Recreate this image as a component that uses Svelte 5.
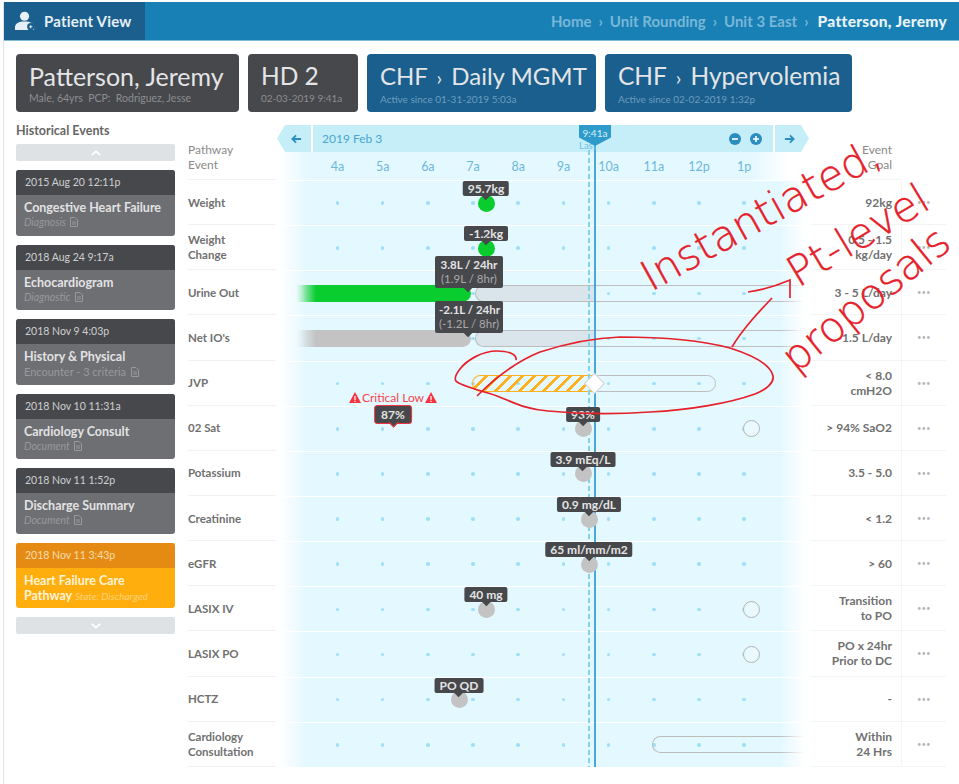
<script>
  const history = [
    { date: '2015 Aug 20 12:11p', title: 'Congestive Heart Failure', sub: 'Diagnosis', italic: true },
    { date: '2018 Aug 24 9:17a', title: 'Echocardiogram', sub: 'Diagnostic', italic: true },
    { date: '2018 Nov 9 4:03p', title: 'History & Physical', sub: 'Encounter - 3 criteria', italic: false },
    { date: '2018 Nov 10 11:31a', title: 'Cardiology Consult', sub: 'Document', italic: true },
    { date: '2018 Nov 11 1:52p', title: 'Discharge Summary', sub: 'Document', italic: true }
  ];

  const hours = ['4a', '5a', '6a', '7a', '8a', '9a', '10a', '11a', '12p', '1p'];

  // x values are page pixels, the track column starts at 276
  const rows = [
    { name: ['Weight'], goal: ['92kg'], marks: [{ x: 486, kind: 'green', tag: '95.7kg' }] },
    { name: ['Weight', 'Change'], goal: ['0.5 - 1.5', 'kg/day'], marks: [{ x: 486, kind: 'green', tag: '-1.2kg' }] },
    {
      name: ['Urine Out'], goal: ['3 - 5 L/day'],
      bars: [{ from: 296, to: 471, kind: 'solid-green' }, { from: 475, to: 811, kind: 'ghost open filled' }],
      marks: [{ x: 468, tagOnly: true, tag: '3.8L / 24hr', sub: '(1.9L / 8hr)' }]
    },
    {
      name: ["Net IO's"], goal: ['-1.5 L/day'],
      bars: [{ from: 296, to: 471, kind: 'solid-grey' }, { from: 475, to: 811, kind: 'ghost open filled' }],
      marks: [{ x: 468, tagOnly: true, tag: '-2.1L / 24hr', sub: '(-1.2L / 8hr)' }]
    },
    {
      name: ['JVP'], goal: ['< 8.0', 'cmH2O'],
      bars: [{ from: 590, to: 716, kind: 'ghost' }, { from: 472, to: 594, kind: 'hatched' }],
      diamond: 595
    },
    {
      name: ['02 Sat'], goal: ['> 94% SaO2'],
      critical: { x: 393, tag: '87%' },
      marks: [{ x: 583, kind: 'grey', tag: '93%' }, { x: 751, kind: 'open' }]
    },
    { name: ['Potassium'], goal: ['3.5 - 5.0'], marks: [{ x: 583, kind: 'grey', tag: '3.9 mEq/L' }] },
    { name: ['Creatinine'], goal: ['< 1.2'], marks: [{ x: 589, kind: 'grey', tag: '0.9 mg/dL' }] },
    { name: ['eGFR'], goal: ['> 60'], marks: [{ x: 589, kind: 'grey', tag: '65 ml/mm/m2' }] },
    { name: ['LASIX IV'], goal: ['Transition', 'to PO'], marks: [{ x: 486, kind: 'grey', tag: '40 mg' }, { x: 751, kind: 'open' }] },
    { name: ['LASIX PO'], goal: ['PO x 24hr', 'Prior to DC'], marks: [{ x: 751, kind: 'open' }] },
    { name: ['HCTZ'], goal: ['-'], marks: [{ x: 459, kind: 'grey', tag: 'PO QD' }] },
    { name: ['Cardiology', 'Consultation'], goal: ['Within', '24 Hrs'], bars: [{ from: 652, to: 811, kind: 'ghost open' }] }
  ];

  const px = (x) => x - 276;
</script>

{#snippet docIcon()}
  <svg class="doc" viewBox="0 0 8 10" width="8" height="10">
    <path d="M.5.5h4.5l2.500 2.500v6.500h-7z" fill="none" stroke="currentColor" />
    <path d="M2 5h4M2 7h4" stroke="currentColor" />
  </svg>
{/snippet}

{#snippet warnIcon()}
  <svg viewBox="0 0 12 11" width="12" height="11">
    <path d="M6 0l6 11H0z" fill="#f5333f" />
    <path d="M5.400 4h1.200v4h-1.200zM5.400 8.800h1.200v1.200h-1.200z" fill="#fff" />
  </svg>
{/snippet}

<div class="page">
  <header class="topbar">
    <div class="tab">
      <svg viewBox="0 0 22 22" width="21" height="21">
        <circle cx="10" cy="5.500" r="4.800" fill="#e6f0f6" />
        <path d="M0 20v-3c0-4 4-6 10-6s10 2 10 6v3z" fill="#e6f0f6" />
        <circle cx="16.500" cy="16.500" r="3.800" fill="#1a5f8e" />
        <path d="M14.800 16.500h3.400M16.500 14.800v3.400" stroke="#e6f0f6" />
      </svg>
      <span>Patient View</span>
    </div>
    <nav class="crumbs">
      <span>Home</span><i>›</i><span>Unit Rounding</span><i>›</i><span>Unit 3 East</span><i>›</i>
      <b>Patterson, Jeremy</b>
    </nav>
  </header>

  <section class="summary">
    <div class="card patient">
      <h1>Patterson, Jeremy</h1>
      <p>Male, 64yrs &nbsp;PCP: &nbsp;Rodriguez, Jesse</p>
    </div>
    <div class="card day">
      <h1>HD 2</h1>
      <p>02-03-2019 9:41a</p>
    </div>
    <div class="card blue daily">
      <h1>CHF <i>›</i> Daily MGMT</h1>
      <p>Active since 01-31-2019 5:03a</p>
    </div>
    <div class="card blue hyper">
      <h1>CHF <i>›</i> Hypervolemia</h1>
      <p>Active since 02-02-2019 1:32p</p>
    </div>
  </section>

  <main class="content">
    <aside class="sidebar">
      <h2>Historical Events</h2>
      <button class="pager" aria-label="Earlier">
        <svg viewBox="0 0 12 7" width="10" height="6"><path d="M1 6l5-4.500L11 6" fill="none" stroke="#fff" stroke-width="2" /></svg>
      </button>
      {#each history as item}
        <article class="event">
          <div class="when">{item.date}</div>
          <div class="what">
            <strong>{item.title}</strong>
            <em class:plain={!item.italic}>{item.sub} {@render docIcon()}</em>
          </div>
        </article>
      {/each}
      <article class="event active">
        <div class="when">2018 Nov 11 3:43p</div>
        <div class="what">
          <strong>Heart Failure Care<br />Pathway <em>State: Discharged</em></strong>
        </div>
      </article>
      <button class="pager" aria-label="Later">
        <svg viewBox="0 0 12 7" width="10" height="6"><path d="M1 1l5 4.500L11 1" fill="none" stroke="#fff" stroke-width="2" /></svg>
      </button>
    </aside>

    <div class="board">
      <div class="row head">
        <div class="name">Pathway<br />Event</div>
        <div class="timehead">
          <div class="navbar">
            <button class="step back" aria-label="Previous">
              <svg viewBox="0 0 12 10" width="11" height="10"><path d="M11 5H2M5.500 1L1.500 5l4 4" fill="none" stroke="#2a8fc0" stroke-width="2" /></svg>
            </button>
            <div class="range">
              <span>2019 Feb 3</span>
              <div class="zoomers">
                <svg viewBox="0 0 12 12" width="12" height="12"><circle cx="6" cy="6" r="6" fill="#2a8fc0" /><path d="M3 6h6" stroke="#fff" stroke-width="1.600" /></svg>
                <svg viewBox="0 0 12 12" width="12" height="12"><circle cx="6" cy="6" r="6" fill="#2a8fc0" /><path d="M3 6h6M6 3v6" stroke="#fff" stroke-width="1.600" /></svg>
              </div>
            </div>
            <button class="step next" aria-label="Next">
              <svg viewBox="0 0 12 10" width="11" height="10"><path d="M1 5h9M6.500 1l4 4-4 4" fill="none" stroke="#2a8fc0" stroke-width="2" /></svg>
            </button>
          </div>
          <div class="hours">
            {#each hours as h}<span>{h}</span>{/each}
          </div>
        </div>
        <div class="goal">Event<br />Goal</div>
        <div class="more blank"></div>
      </div>

      {#each rows as row}
        <div class="row">
          <div class="name"><span>{#each row.name as line, i}{#if i}<br />{/if}{line}{/each}</span></div>
          <div class="track">
            <div class="dots">{#each hours as h}<span><i></i></span>{/each}</div>
            {#each row.bars ?? [] as bar}
              <div class="bar {bar.kind}" style="left:{px(bar.from)}px;width:{bar.to - bar.from}px"></div>
            {/each}
            {#if row.diamond}
              <div class="diamond" style="left:{px(row.diamond)}px"></div>
            {/if}
            {#if row.critical}
              <div class="critical" style="left:{px(row.critical.x)}px">
                <div class="warn">{@render warnIcon()}Critical Low{@render warnIcon()}</div>
                <div class="tag alert">{row.critical.tag}</div>
              </div>
            {/if}
            {#each row.marks ?? [] as mark}
              <div class="mark" style="left:{px(mark.x)}px">
                {#if mark.kind}<span class="circle {mark.kind}"></span>{/if}
                {#if mark.tag}
                  <div class="tag" class:high={mark.tagOnly}>
                    {mark.tag}{#if mark.sub}<small>{mark.sub}</small>{/if}
                  </div>
                {/if}
              </div>
            {/each}
          </div>
          <div class="goal"><span>{#each row.goal as line, i}{#if i}<br />{/if}{line}{/each}</span></div>
          <div class="more">•••</div>
        </div>
      {/each}

      <div class="lastline"></div>
      <div class="nowline"></div>
      <div class="lastlabel">Last</div>
      <div class="nowflag">9:41a</div>
    </div>
  </main>

  <svg class="ink" viewBox="0 0 959 784" width="959" height="784">
    <path d="M516 360C517 354 508 351 497 351C482 351 467 360 460 369C456 374 454 378 456 381C460 386 480 390 497 396C515 403 525 409 548 411C580 414 620 414 650 412C690 410 730 403 755 394C768 389 774 382 773 376C771 366 755 356 730 348C700 340 660 337 620 337C590 338 565 344 540 352C515 362 495 378 477 396" />
    <path d="M748 292c15-2 28-6 42-12l0 18M772 298c-16 17-30 32-40 49" />
    <text transform="translate(651 292) rotate(-29)">Instantiated,</text>
    <text transform="translate(798 288) rotate(-31)">Pt-level</text>
    <text transform="translate(796 374) rotate(-39)">proposals</text>
  </svg>
</div>

<style>
  :global(body) {
    background: #fff;
    font-family: 'Lato', 'Open Sans', sans-serif;
    color: #6a6a6a;
  }

  .page {
    position: relative;
    width: 956px;
    height: 782px;
    margin: 2px 0 0 3px;
    border-left: 1px solid #e3e3e3;
    box-sizing: border-box;
    overflow: hidden;
  }

  .topbar {
    display: flex;
    align-items: center;
    justify-content: space-between;
    height: 39px;
    background: #1880b5;
    border-bottom: 1px solid #7fbcdc;
    box-sizing: border-box;
    padding-right: 12px;
  }

  .tab {
    display: flex;
    align-items: center;
    gap: 8px;
    height: 100%;
    width: 141px;
    padding-left: 11px;
    box-sizing: border-box;
    background: #1a5f8e;
    color: #e6f0f6;
    font-size: 15px;
    letter-spacing: 0.2px;
    font-weight: 700;
  }

  .crumbs {
    display: flex;
    align-items: center;
    font-size: 15px;
    font-weight: 700;
    color: #79b7d8;
  }

  .crumbs i {
    font-style: normal;
    margin: 0 7px;
  }

  .crumbs b {
    margin-left: 2px;
    font-size: 15.500px;
    letter-spacing: 0.3px;
    color: #e9f3f8;
  }

  .summary {
    display: flex;
    gap: 9px;
    padding: 13px 0 0 12px;
  }

  .card {
    height: 58px;
    box-sizing: border-box;
    padding: 8px 13px 0;
    background: #47484c;
    border-radius: 4px;
    color: #e3e5e6;
  }

  .card.blue {
    background: #1a5f8e;
  }

  .patient { width: 223px; }
  .day { width: 110px; }
  .daily { width: 229px; }
  .hyper { width: 247px; }

  .card h1 {
    margin: 0;
    font-size: 24.500px;
    font-weight: 400;
    line-height: 28px;
    white-space: nowrap;
  }

  .patient h1 {
    font-size: 25px;
  }

  .daily h1 {
    font-size: 24px;
  }

  .card h1 i {
    font-style: normal;
    font-size: 20px;
    margin: 0 3px;
  }

  .card p {
    margin: 2px 0 0;
    font-size: 10px;
    line-height: 12px;
    color: #8d8e92;
    white-space: nowrap;
  }

  .patient p {
    font-size: 10.500px;
  }

  .card.blue p {
    color: #6d9dbe;
  }

  .content {
    display: flex;
    gap: 13px;
    padding: 13px 0 0 12px;
  }

  .sidebar {
    width: 159px;
    flex: none;
  }

  .sidebar h2 {
    margin: -1px 0 0;
    height: 20px;
    font-size: 12.500px;
    line-height: 13px;
    font-weight: 700;
    color: #666;
  }

  .pager {
    display: flex;
    align-items: center;
    justify-content: center;
    width: 100%;
    height: 17px;
    padding: 0;
    border: 0;
    border-radius: 2px;
    background: #dfe2e5;
  }

  .event {
    margin-top: 9px;
    height: 65.500px;
    border-radius: 3px;
    overflow: hidden;
    background: #6e6f73;
  }

  .event + .pager {
    margin-top: 9px;
  }

  .when {
    height: 25px;
    padding-left: 9px;
    background: #47484c;
    color: #cfcfd1;
    font-size: 10.500px;
    line-height: 25px;
  }

  .what {
    padding: 5px 8px 0;
  }

  .what strong {
    display: block;
    color: #e2e2e3;
    font-size: 12.500px;
    line-height: 15px;
    font-weight: 700;
    white-space: nowrap;
  }

  .what em {
    display: block;
    color: #98999c;
    font-size: 10.500px;
    line-height: 15px;
    white-space: nowrap;
  }

  .what em.plain {
    font-style: normal;
    font-size: 11px;
  }

  .doc {
    margin-left: 2px;
    vertical-align: -1px;
  }

  .event.active {
    background: #ffae0d;
  }

  .active .when {
    background: #e58b14;
    color: #f8dcae;
  }

  .active .what strong {
    color: #fff3d8;
  }

  .active .what strong em {
    display: inline;
    color: #ffd27a;
    font-size: 10px;
    font-weight: 400;
  }

  .board {
    position: relative;
    width: 758px;
  }

  .row {
    display: grid;
    grid-template-columns: 88px 535px 90px 45px;
    height: 45.150px;
    box-sizing: border-box;
  }

  .row.head {
    height: 55px;
  }

  .name {
    display: flex;
    align-items: center;
    font-size: 11.500px;
    line-height: 15px;
    font-weight: 700;
    color: #707070;
    border-bottom: 1px solid #f1f2f3;
    box-sizing: border-box;
  }

  .head .name {
    display: block;
    padding-top: 17px;
    font-size: 12px;
    font-weight: 400;
    color: #8a8a8a;
  }

  .timehead {
    position: relative;
    background: linear-gradient(90deg, #fff 4px, #e4f8ff 32px, #e4f8ff calc(100% - 60px), #fff calc(100% - 22px));
  }

  .navbar {
    display: flex;
    gap: 2px;
    height: 27px;
    padding: 0 2px 0 1px;
    background: #fff;
  }

  .step {
    flex: none;
    width: 34px;
    padding: 0;
    border: 0;
    background: #c5eef9;
    display: flex;
    align-items: center;
    justify-content: center;
  }

  .back {
    clip-path: polygon(8px 0, 100% 0, 100% 100%, 8px 100%, 0 50%);
    padding-left: 4px;
  }

  .next {
    clip-path: polygon(0 0, calc(100% - 8px) 0, 100% 50%, calc(100% - 8px) 100%, 0 100%);
    padding-right: 5px;
  }

  .range {
    flex: 1;
    display: flex;
    align-items: center;
    justify-content: space-between;
    padding: 0 10px 0 9px;
    background: #c5eef9;
    color: #4aa5d0;
    font-size: 12px;
  }

  .zoomers {
    display: flex;
    gap: 9px;
    padding-right: 1px;
  }

  .zoomers svg {
    display: block;
  }

  .hours {
    display: flex;
    height: 28px;
    padding-left: 38.900px;
    align-items: center;
  }

  .hours span {
    width: 45.200px;
    text-align: center;
    color: #6cb8dc;
    font-size: 12.500px;
  }

  .track {
    position: relative;
    background: #e4f8ff;
    border-top: 1px solid #fff;
    box-sizing: border-box;
  }

  .track::after {
    content: '';
    position: absolute;
    inset: 0;
    z-index: 3;
    pointer-events: none;
    background: linear-gradient(90deg, #fff 4px, #fff0 30px, #fff0 calc(100% - 31px), #fff calc(100% - 6px));
  }

  .dots {
    display: flex;
    align-items: center;
    height: 100%;
    padding-left: 38.900px;
  }

  .dots span {
    display: flex;
    justify-content: center;
    width: 45.200px;
  }

  .dots i {
    width: 3.500px;
    height: 3.500px;
    border-radius: 50%;
    background: #9fe0f8;
  }

  .bar {
    position: absolute;
    top: calc(50% - 8.500px);
    height: 17px;
    box-sizing: border-box;
  }

  .solid-green {
    border-radius: 0 9px 9px 0;
    background: linear-gradient(90deg, #09cc2f00, #09cc2f 20px);
  }

  .solid-grey {
    border-radius: 0 9px 9px 0;
    background: linear-gradient(90deg, #c3c3c300, #c3c3c3 20px);
  }

  .ghost {
    border: 1.500px solid #bdbdbd;
    border-radius: 9px;
  }

  .ghost.open {
    border-right: 0;
    border-radius: 9px 0 0 9px;
  }

  .ghost.filled {
    background: linear-gradient(90deg, #d9e5ea 120px, transparent 120px);
  }

  .hatched {
    border: 1.500px solid #ffb020;
    border-right: 0;
    border-radius: 9px 0 0 9px;
    background: repeating-linear-gradient(-45deg, #ffb020 0 3px, transparent 3px 8.500px);
  }

  .diamond {
    position: absolute;
    top: calc(50% - 8px);
    width: 15px;
    height: 15px;
    margin-left: -8px;
    z-index: 2;
    box-sizing: border-box;
    background: #fff;
    border: 1px solid #cfcfcf;
    transform: rotate(45deg);
  }

  .mark,
  .critical {
    position: absolute;
    top: 50%;
    width: 0;
    z-index: 2;
  }

  .circle {
    position: absolute;
    left: -8.500px;
    top: -8.500px;
    width: 17px;
    height: 17px;
    box-sizing: border-box;
    border-radius: 50%;
  }

  .circle.green { background: #09cc2f; }
  .circle.grey { background: #c3c3c3; }
  .circle.open {
    border: 1.500px solid #b3b3b3;
    background: #e9f9ff;
  }

  .tag {
    position: absolute;
    left: 0;
    bottom: 7px;
    transform: translateX(-50%);
    padding: 1px 5px;
    border-radius: 2px;
    background: #47484c;
    color: #e4e4e4;
    font-size: 12px;
    line-height: 13px;
    font-weight: 700;
    text-align: center;
    white-space: nowrap;
  }

  .tag::after {
    content: '';
    position: absolute;
    left: 50%;
    bottom: -3px;
    width: 6px;
    height: 6px;
    margin-left: -3px;
    background: inherit;
    transform: rotate(45deg);
  }

  .tag.high {
    bottom: 5px;
    transform: translateX(-33px);
    width: 60px;
    padding: 2px 4px;
    line-height: 14px;
    font-size: 11.500px;
  }

  .tag.high::after {
    left: 33px;
  }

  .tag small {
    display: block;
    color: #a9a9ab;
    font-size: 11.500px;
    font-weight: 400;
  }

  .warn {
    position: absolute;
    bottom: 25px;
    left: -45px;
    width: 90px;
    display: flex;
    align-items: center;
    justify-content: center;
    gap: 1px;
    color: #f5434e;
    font-size: 12px;
    line-height: 12px;
    white-space: nowrap;
  }

  .tag.alert {
    bottom: 5px;
    padding: 2px 6px;
    border: 1px solid #f0343f;
    border-radius: 3px;
  }

  .tag.alert::after {
    border-right: 1px solid #f0343f;
    border-bottom: 1px solid #f0343f;
  }

  .goal {
    display: flex;
    align-items: center;
    justify-content: flex-end;
    text-align: right;
    padding-right: 9px;
    font-size: 12px;
    line-height: 15px;
    font-weight: 700;
    color: #707070;
    border-bottom: 1px solid #f3f4f5;
    box-sizing: border-box;
  }

  .head .goal {
    align-items: flex-start;
    padding-top: 17px;
    font-weight: 400;
    color: #8a8a8a;
  }

  .more {
    display: flex;
    align-items: center;
    justify-content: center;
    border-left: 1px solid #f3f4f5;
    border-bottom: 1px solid #f3f4f5;
    box-sizing: border-box;
    color: #b5b5b5;
    font-size: 7px;
    letter-spacing: 0.500px;
  }

  .more.blank {
    border: 0;
  }

  /* current time markers run over all the rows */
  .lastline,
  .nowline {
    position: absolute;
    bottom: 0;
    z-index: 1;
    width: 2px;
  }

  .lastline {
    left: 400px;
    top: 25px;
    background: repeating-linear-gradient(#7fd4f0 0 5px, transparent 5px 8px);
  }

  .nowline {
    left: 406px;
    top: 14px;
    background: #4aa8d8;
  }

  .lastlabel {
    position: absolute;
    left: 391px;
    top: 15px;
    z-index: 1;
    font-size: 9.500px;
    line-height: 12px;
    color: #6cc3e6;
  }

  .nowflag {
    position: absolute;
    left: 391px;
    top: 0;
    z-index: 2;
    width: 32px;
    height: 21px;
    padding-top: 2px;
    box-sizing: border-box;
    background: #2f9bcb;
    clip-path: polygon(0 0, 100% 0, 100% 60%, 50% 100%, 0 60%);
    color: #d7eef8;
    font-size: 10px;
    line-height: 12px;
    text-align: center;
  }

  /* pen annotation scribbled over the screenshot */
  .ink {
    position: absolute;
    left: -4px;
    top: -2px;
    z-index: 5;
    pointer-events: none;
  }

  .ink path {
    fill: none;
    stroke: #e5202a;
    stroke-width: 1.700px;
  }

  .ink text {
    fill: #e5202a;
    stroke: #e5202a;
    stroke-width: 0.4px;
    font-family: 'DejaVu Sans', sans-serif;
    font-weight: 200;
    font-size: 42px;
  }
</style>
